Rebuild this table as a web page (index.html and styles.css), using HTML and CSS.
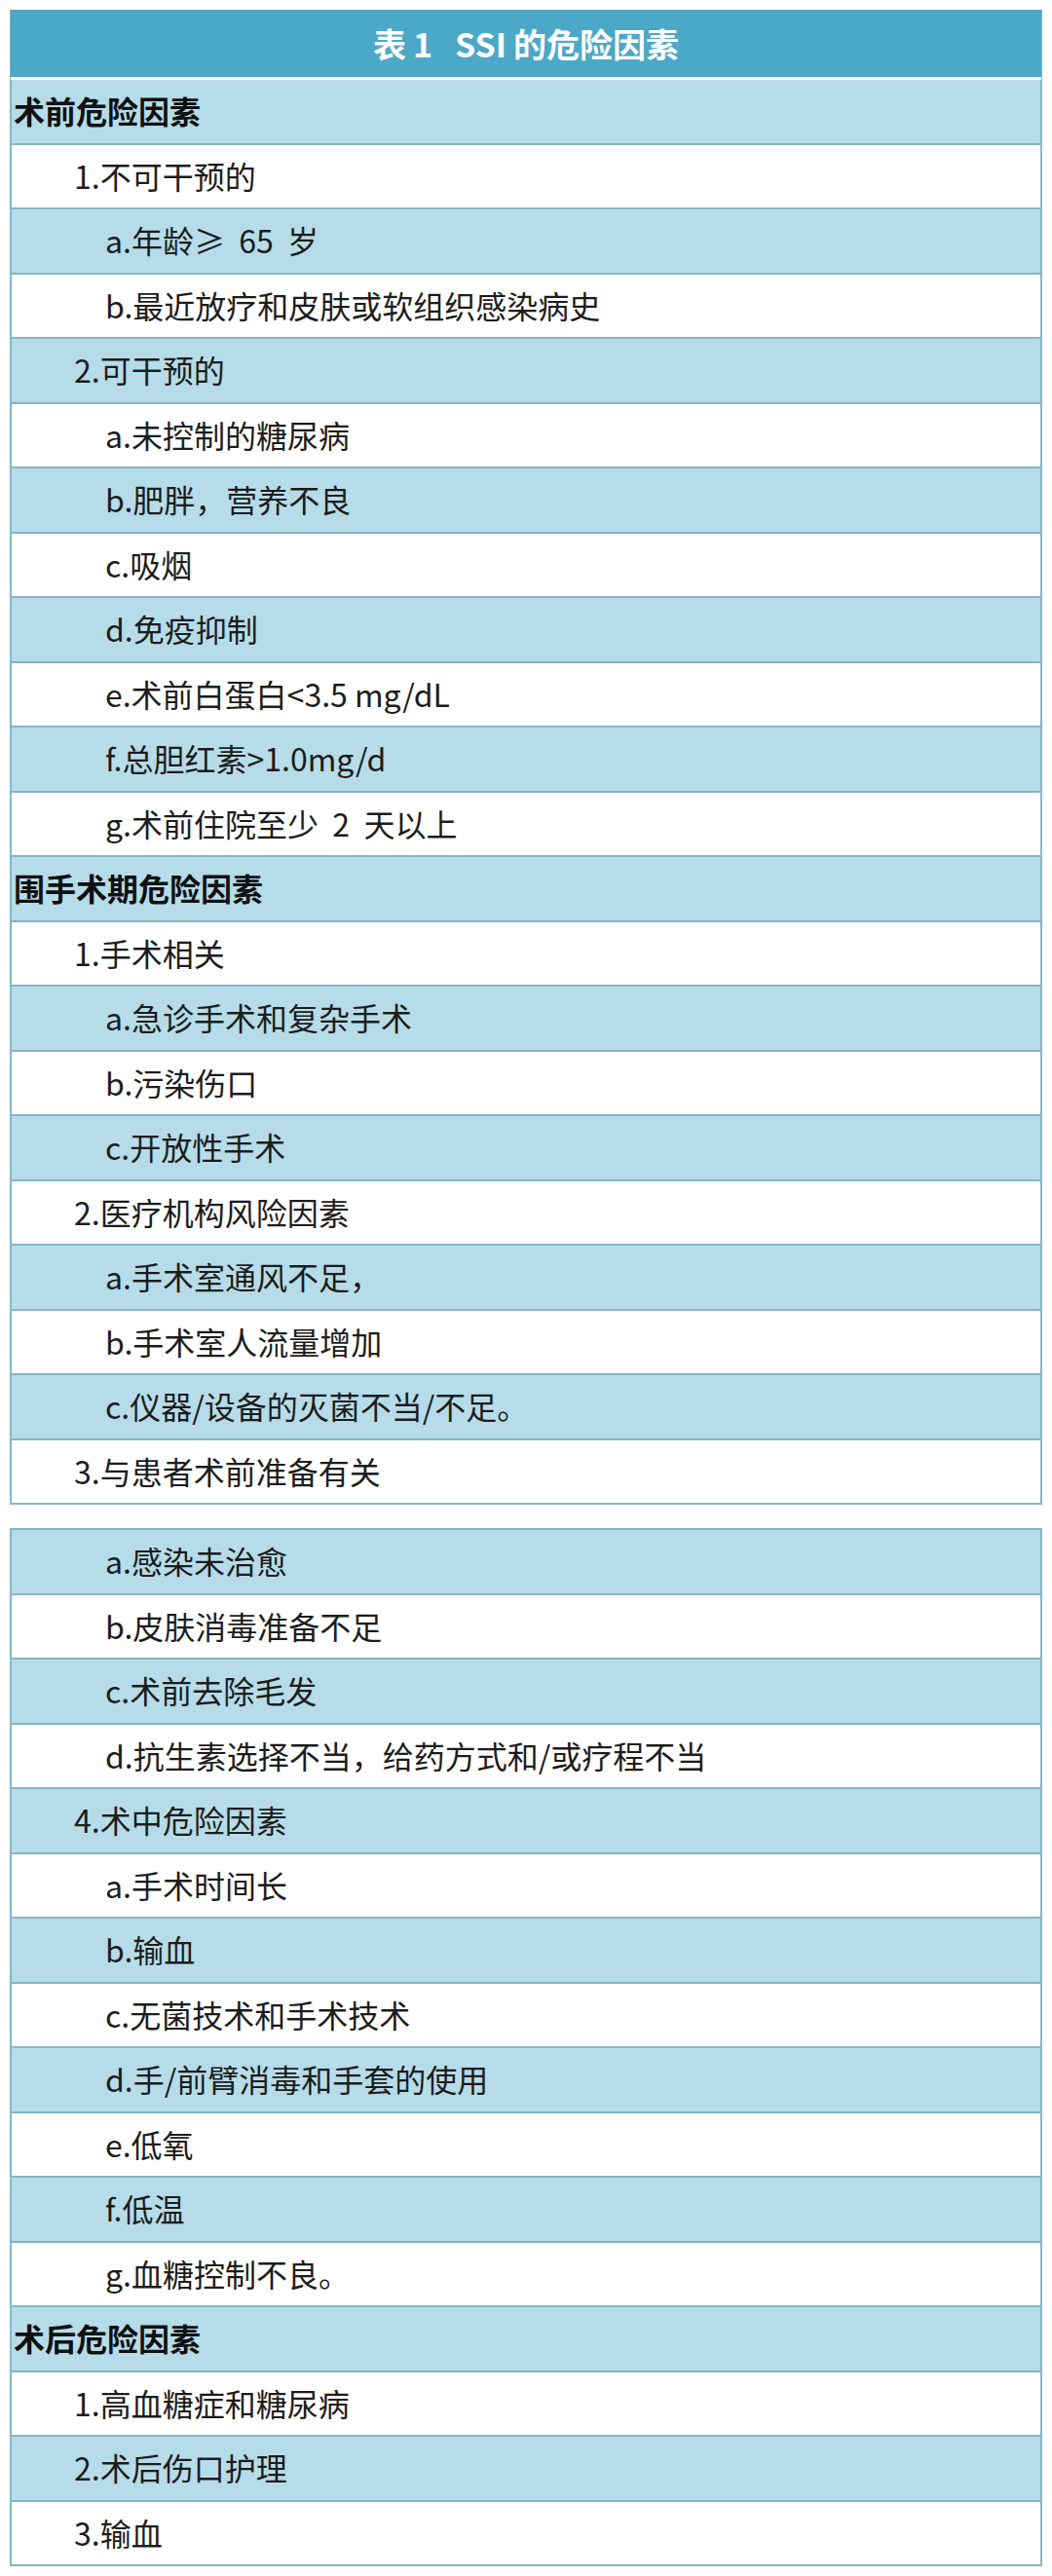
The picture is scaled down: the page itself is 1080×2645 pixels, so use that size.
FILE: index.html
```html
<!DOCTYPE html>
<html lang="zh-CN">
<head>
<meta charset="utf-8">
<title>表1 SSI的危险因素</title>
<link rel="stylesheet" href="styles.css">
</head>
<body>
<div class="page">
  <div class="tbl">
    <div class="head"><span>表</span><span class="num">1</span><span class="abbr">SSI</span><span>的危险因素</span></div>
    <div class="row alt sec">术前危险因素</div>
    <div class="row l1">1.不可干预的</div>
    <div class="row alt l2">a.年龄≥&nbsp; 65&nbsp; 岁</div>
    <div class="row l2">b.最近放疗和皮肤或软组织感染病史</div>
    <div class="row alt l1">2.可干预的</div>
    <div class="row l2">a.未控制的糖尿病</div>
    <div class="row alt l2">b.肥胖，营养不良</div>
    <div class="row l2">c.吸烟</div>
    <div class="row alt l2">d.免疫抑制</div>
    <div class="row l2">e.术前白蛋白&lt;3.5 mg/dL</div>
    <div class="row alt l2">f.总胆红素&gt;1.0mg/d</div>
    <div class="row l2">g.术前住院至少&nbsp; 2&nbsp; 天以上</div>
    <div class="row alt sec">围手术期危险因素</div>
    <div class="row l1">1.手术相关</div>
    <div class="row alt l2">a.急诊手术和复杂手术</div>
    <div class="row l2">b.污染伤口</div>
    <div class="row alt l2">c.开放性手术</div>
    <div class="row l1">2.医疗机构风险因素</div>
    <div class="row alt l2">a.手术室通风不足，</div>
    <div class="row l2">b.手术室人流量增加</div>
    <div class="row alt l2">c.仪器/设备的灭菌不当/不足。</div>
    <div class="row l1">3.与患者术前准备有关</div>
  </div>
  <div class="tbl">
    <div class="row alt l2">a.感染未治愈</div>
    <div class="row l2">b.皮肤消毒准备不足</div>
    <div class="row alt l2">c.术前去除毛发</div>
    <div class="row l2">d.抗生素选择不当，给药方式和/或疗程不当</div>
    <div class="row alt l1">4.术中危险因素</div>
    <div class="row l2">a.手术时间长</div>
    <div class="row alt l2">b.输血</div>
    <div class="row l2">c.无菌技术和手术技术</div>
    <div class="row alt l2">d.手/前臂消毒和手套的使用</div>
    <div class="row l2">e.低氧</div>
    <div class="row alt l2">f.低温</div>
    <div class="row l2">g.血糖控制不良。</div>
    <div class="row alt sec">术后危险因素</div>
    <div class="row l1">1.高血糖症和糖尿病</div>
    <div class="row alt l1">2.术后伤口护理</div>
    <div class="row l1">3.输血</div>
  </div>
</div>
</body>
</html>
```

FILE: styles.css
```css
html, body {
  margin: 0;
  padding: 0;
  background: #ffffff;
}

body {
  font-family: "Noto Sans CJK SC", "Noto Sans", sans-serif;
  color: #1c1c1c;
}

.page {
  display: flex;
  flex-direction: column;
  gap: 24px;
  padding: 10px 10px 14px 10px;
}

.tbl {
  display: flex;
  flex-direction: column;
  border-left: 2px solid #84b6c6;
  border-right: 2px solid #84b6c6;
  border-top: 2px solid #84b6c6;
}

.head {
  height: 65px;
  border-bottom: 3px solid #ffffff;
  background: #4ba8c7;
  color: #ffffff;
  font-weight: 700;
  font-size: 34px;
  line-height: 1;
  display: flex;
  align-items: center;
  justify-content: center;
  margin-top: -2px;
  margin-left: -1px;
  margin-right: -1px;
  border-top: 2px solid #4ba8c7;
  padding-bottom: 2px;
  box-sizing: content-box;
}

.head .num {
  margin-left: 7px;
}

.head .abbr {
  margin-left: 23px;
  margin-right: 7px;
}

.row {
  box-sizing: border-box;
  height: 66.5px;
  border-bottom: 2px solid #84b6c6;
  background: #ffffff;
  display: flex;
  align-items: center;
  font-size: 32px;
  line-height: 1;
  white-space: nowrap;
  padding-bottom: 2px;
}

.row.alt {
  background: #b6dce9;
}

.sec {
  font-weight: 700;
  font-size: 32px;
  padding-left: 2px;
  color: #111111;
}

.l1 {
  padding-left: 64px;
}

.l2 {
  padding-left: 96px;
}
```
